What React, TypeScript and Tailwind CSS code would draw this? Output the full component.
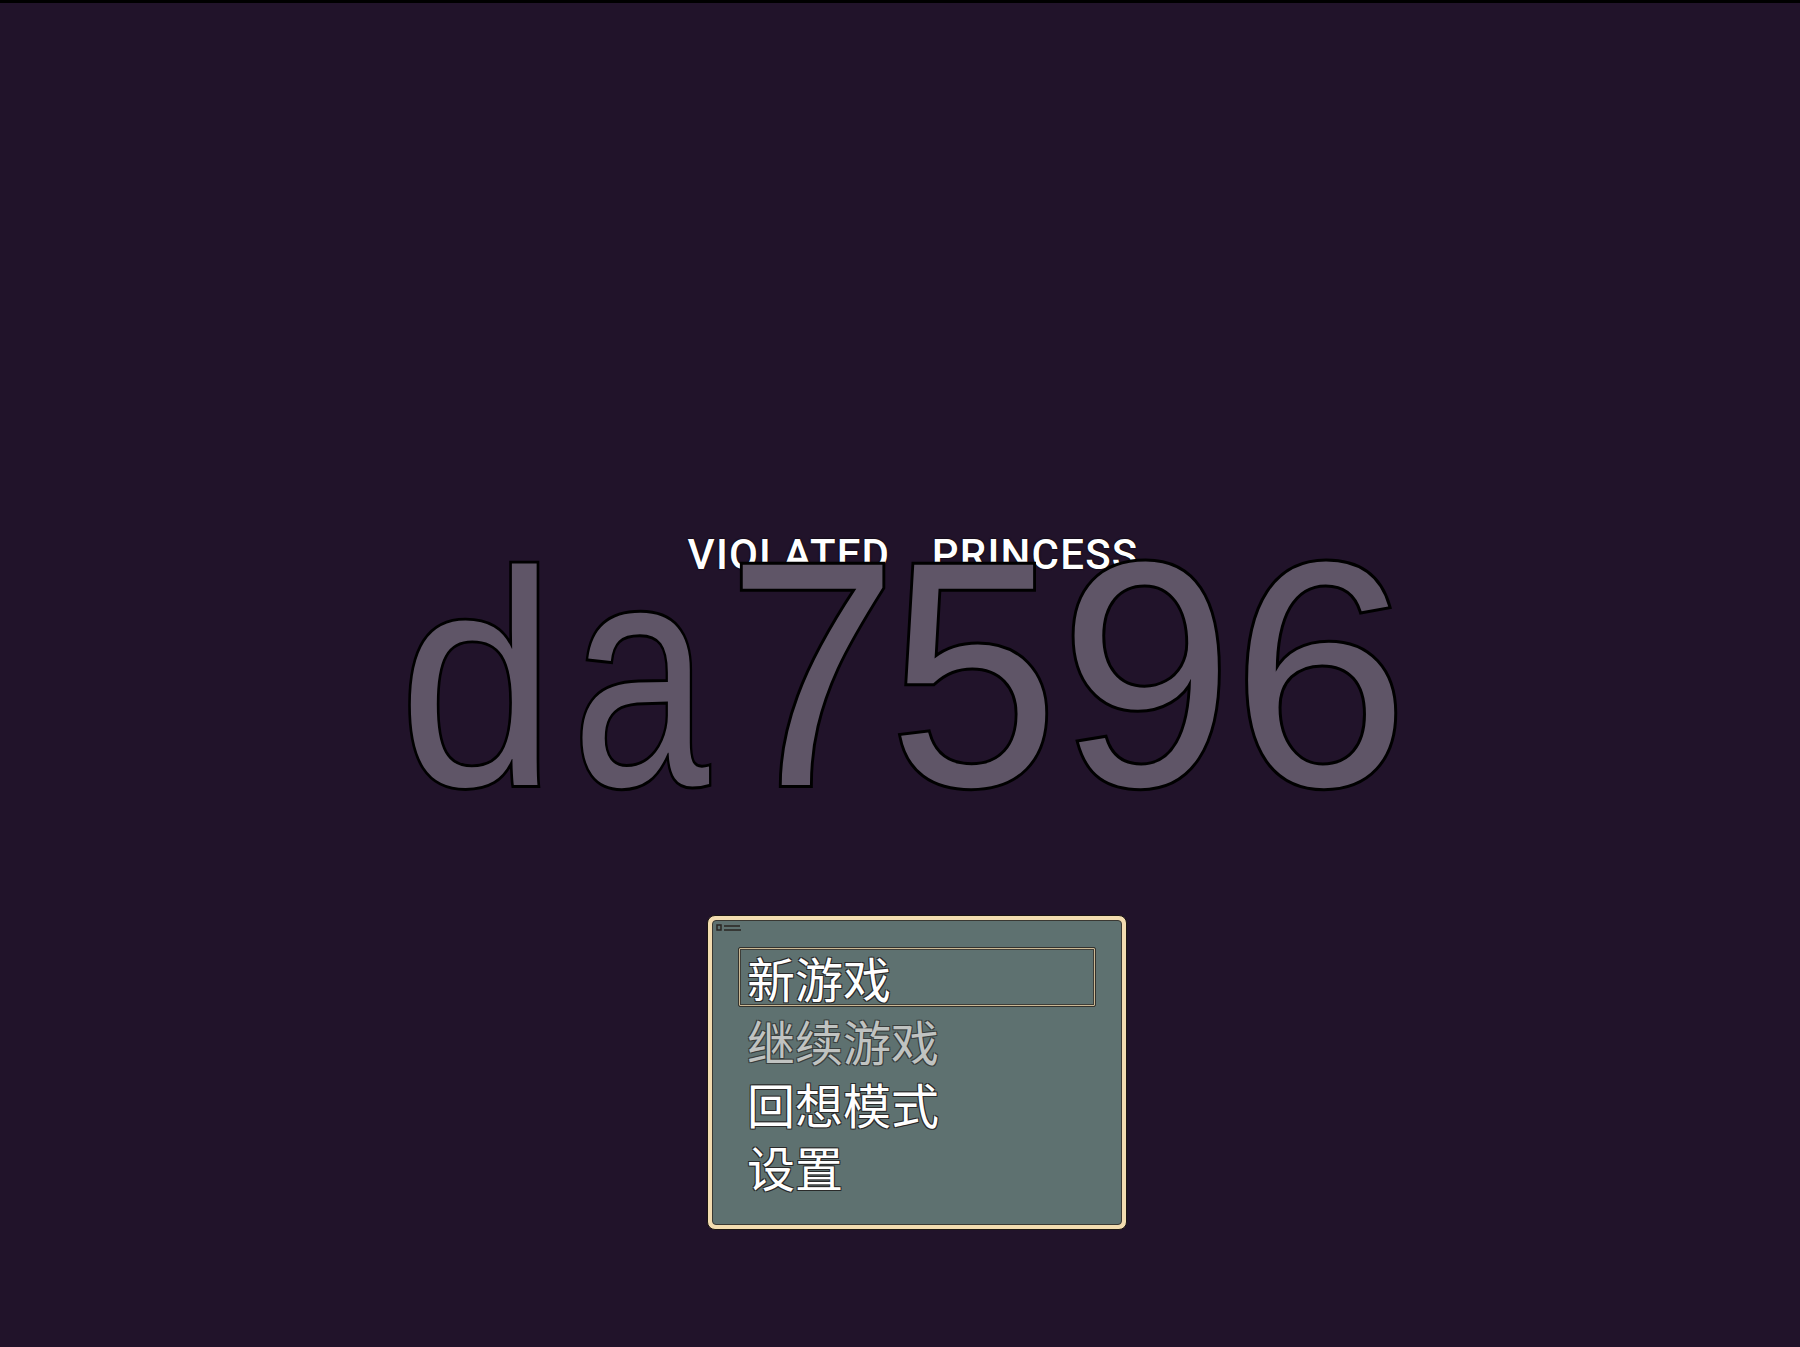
import React from "react";

const menuItems = [
  { label: "新游戏", enabled: true, selected: true },
  { label: "继续游戏", enabled: false, selected: false },
  { label: "回想模式", enabled: true, selected: false },
  { label: "设置", enabled: true, selected: false },
];

// 水印字符：位置与横向缩放按原图逐个对齐
const watermark = [
  { ch: "d", left: 399, cls: "scale-x-[0.88] scale-y-[0.955]" },
  { ch: "a", left: 572, cls: "scale-x-[0.77]" },
  { ch: "7", left: 727, cls: "scale-x-[0.96]" },
  { ch: "5", left: 889, cls: "scale-x-[0.95]" },
  { ch: "9", left: 1060, cls: "scale-x-[0.97]" },
  { ch: "6", left: 1232, cls: "scale-x-[0.99]" },
];

const App: React.FC = () => {
  return (
    <div className="relative h-[1347px] w-full overflow-hidden border-t-[3px] border-black bg-[#21132a]">
      <div className="flex flex-col items-center pt-[531px]">
        {/* 标题 */}
        <h1 className="ml-[26px] whitespace-pre font-['Roboto','Liberation_Sans',sans-serif] text-[42px] font-medium leading-none tracking-[1.2px] text-white [word-spacing:30px] [text-shadow:0_0_2px_#000,0_0_1px_#000]">
          VIOLATED PRINCESS
        </h1>

        {/* 菜单窗口 */}
        <div className="ml-[34px] mt-[339px] h-[315px] w-[420px] rounded-[8px] border border-[#1c1612] bg-[#f3dcb0] p-[4px]">
          <div className="relative h-full w-full rounded-[4px] border border-[#3a3832] bg-[#5e7170] px-[25px] pt-[25px]">
            <svg
              className="absolute left-[3px] top-[3px]"
              width="26"
              height="8"
              viewBox="0 0 26 8"
            >
              <path d="M1 1h4v5H1zM8 2h16M8 6h17" stroke="#2a2622" strokeWidth="1.5" fill="none" />
            </svg>
            {menuItems.map((item) => (
              <div key={item.label} className="relative h-[63px]">
                {item.selected && (
                  <span className="absolute inset-x-0 top-[1px] bottom-[2px] rounded-[2px] border border-[#33322d] shadow-[inset_0_0_0_1px_#cbb894,inset_0_0_0_2px_#3d3d38]" />
                )}
                <span
                  className={`relative block pl-[9px] font-['Noto_Sans_CJK_SC',sans-serif] text-[48px] leading-[63px] ${
                    item.enabled
                      ? "text-white [text-shadow:1px_1px_0_#2a2a2a,-1px_-1px_0_#2a2a2a,1px_-1px_0_#2a2a2a,-1px_1px_0_#2a2a2a]"
                      : "text-[#c0c3c1] [text-shadow:1px_1px_0_#3a3f3e,-1px_-1px_0_#3a3f3e,1px_-1px_0_#3a3f3e,-1px_1px_0_#3a3f3e]"
                  }`}
                >
                  {item.label}
                </span>
              </div>
            ))}
          </div>
        </div>
      </div>

      {/* 水印 */}
      <div className="pointer-events-none absolute inset-x-0 top-[511px] h-[320px] font-['Liberation_Sans',sans-serif] text-[320px] leading-none text-[#5f5567] [-webkit-text-stroke:6px_#000] [paint-order:stroke_fill]">
        {watermark.map((w) => (
          <span
            key={w.ch}
            className={`absolute top-0 origin-[0%_85%] ${w.cls}`}
            style={{ left: w.left }}
          >
            {w.ch}
          </span>
        ))}
      </div>
    </div>
  );
};

export default App;
